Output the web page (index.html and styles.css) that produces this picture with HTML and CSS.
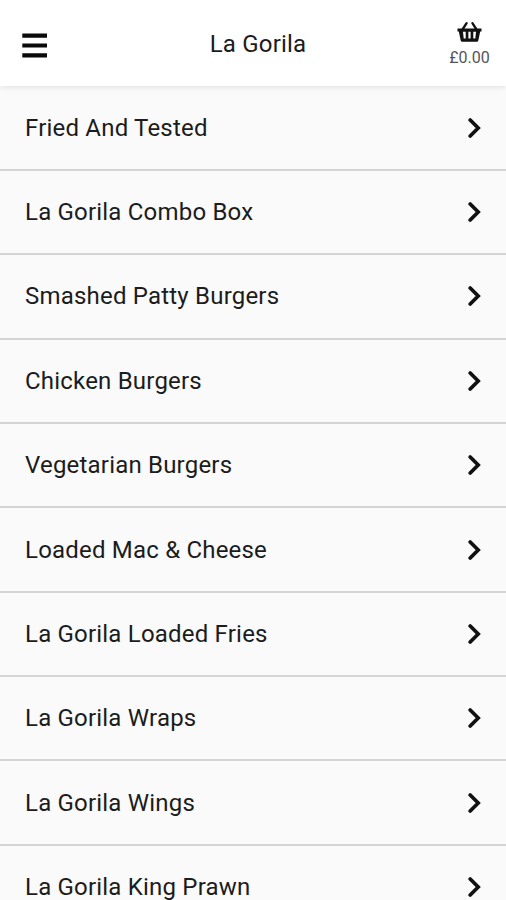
FILE: index.html
```html
<!DOCTYPE html>
<html lang="en">
<head>
<meta charset="utf-8">
<title>La Gorila</title>
<link rel="stylesheet" href="styles.css">
</head>
<body>
<header class="bar">
  <button class="menu" aria-label="Menu"><svg class="menu-icon" viewBox="0 0 26 26"><path d="M.3 2.700h24.700M.3 12.500h24.700M.3 22.300h24.700"/></svg></button>
  <h1 class="title">La Gorila</h1>
  <a class="basket">
    <svg class="basket-icon" viewBox="0 0 26 22"><path d="M5.800 8 9.600 2.200M19.200 8 15.400 2.200" fill="none" stroke="#111" stroke-width="2.300" stroke-linecap="round"/><path fill="#111" fill-rule="evenodd" d="M.5 7.500h24v2.900h-1.300l-1.900 9q-.2 1.300-1.500 1.300H5.200q-1.300 0-1.500-1.300L1.800 10.400H.5zM6 10.800l.7 6.700h2v-6.700zm5.400 0v6.700h2.200v-6.700zm4.900 0v6.700h2l.7-6.700z"/></svg>
    <span class="total">£0.00</span>
  </a>
</header>
<main class="list">
  <a class="row"><span>Fried And Tested</span><svg class="chevron" viewBox="0 0 14 22"><path d="M2.200 3l8 8-8 8"/></svg></a>
  <a class="row"><span>La Gorila Combo Box</span><svg class="chevron" viewBox="0 0 14 22"><path d="M2.200 3l8 8-8 8"/></svg></a>
  <a class="row"><span>Smashed Patty Burgers</span><svg class="chevron" viewBox="0 0 14 22"><path d="M2.200 3l8 8-8 8"/></svg></a>
  <a class="row"><span>Chicken Burgers</span><svg class="chevron" viewBox="0 0 14 22"><path d="M2.200 3l8 8-8 8"/></svg></a>
  <a class="row"><span>Vegetarian Burgers</span><svg class="chevron" viewBox="0 0 14 22"><path d="M2.200 3l8 8-8 8"/></svg></a>
  <a class="row"><span>Loaded Mac &amp; Cheese</span><svg class="chevron" viewBox="0 0 14 22"><path d="M2.200 3l8 8-8 8"/></svg></a>
  <a class="row"><span>La Gorila Loaded Fries</span><svg class="chevron" viewBox="0 0 14 22"><path d="M2.200 3l8 8-8 8"/></svg></a>
  <a class="row"><span>La Gorila Wraps</span><svg class="chevron" viewBox="0 0 14 22"><path d="M2.200 3l8 8-8 8"/></svg></a>
  <a class="row"><span>La Gorila Wings</span><svg class="chevron" viewBox="0 0 14 22"><path d="M2.200 3l8 8-8 8"/></svg></a>
  <a class="row"><span>La Gorila King Prawn</span><svg class="chevron" viewBox="0 0 14 22"><path d="M2.200 3l8 8-8 8"/></svg></a>
</main>
</body>
</html>
```
FILE: styles.css
```css
* { box-sizing: border-box; }
html, body { margin: 0; height: 900px; overflow: hidden; }
body { display: flex; flex-direction: column; background: #fafafa; color: #1c1c1c; font-family: Roboto, sans-serif; }
.bar { flex: none; height: 86px; display: grid; grid-template-columns: 80px 1fr 70px; background: #fff; box-shadow: 0 1px 6px rgba(0,0,0,.11); }
.menu { display: block; width: 26px; height: 26px; margin: 33px 0 0 22px; padding: 0; border: 0; background: none; }
.menu-icon { display: block; width: 26px; height: 26px; }
.menu-icon path { fill: none; stroke: #0a0a0a; stroke-width: 4.2; }
.title { margin: 29px 0 0; text-align: center; font-size: 24px; line-height: 30px; font-weight: 400; letter-spacing: .2px; }
.basket { display: flex; flex-direction: column; align-items: center; padding-top: 21px; margin-right: 3px; }
.basket-icon { width: 26px; height: 22px; }
.total { margin-top: 5px; font-size: 16px; line-height: 19px; color: #555; }
.list { flex: none; padding-top: .6px; }
.row { display: flex; justify-content: space-between; align-items: center; height: 84.36px; padding: 0 24px 0 25px; border-bottom: 2px solid #d4d4d4; font-size: 24px; letter-spacing: .2px; }
.chevron { width: 14px; height: 22px; }
.chevron path { fill: none; stroke: #111; stroke-width: 3.7; stroke-linecap: round; }
```
